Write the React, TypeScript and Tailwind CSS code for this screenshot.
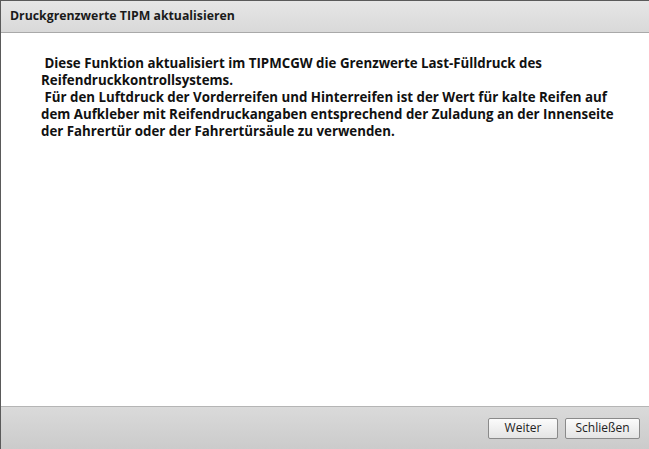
export default function App() {
  const lines = [
    "\u00a0Diese Funktion aktualisiert im TIPMCGW die Grenzwerte Last-Fülldruck des",
    "Reifendruckkontrollsystems.",
    "\u00a0Für den Luftdruck der Vorderreifen und Hinterreifen ist der Wert für kalte Reifen auf",
    "dem Aufkleber mit Reifendruckangaben entsprechend der Zuladung an der Innenseite",
    "der Fahrertür oder der Fahrertürsäule zu verwenden.",
  ];

  return (
    <div
      className="w-[649px] h-[449px] flex flex-col bg-white border-l border-t border-[#5a5a5a] overflow-hidden"
      style={{ fontFamily: '"Open Sans", "DejaVu Sans", sans-serif' }}
    >
      {/* Title bar */}
      <div className="h-[32px] shrink-0 flex items-center px-[9px] bg-gradient-to-b from-[#e6e6e6] to-[#d9d9d9] border-b border-[#a9a9a9]">
        <span className="text-[12.3px] font-bold text-[#1a1a1a]">Druckgrenzwerte TIPM aktualisieren</span>
      </div>

      {/* Body */}
      <div className="flex-1 pt-[22px] pl-[40px] text-[13.3px] font-bold leading-[17px] text-[#111]">
        {lines.map((l, i) => (
          <div key={i} className="whitespace-nowrap">{l}</div>
        ))}
      </div>

      {/* Footer */}
      <div className="h-[43px] shrink-0 flex items-center justify-end gap-[7px] pr-[9px] bg-gradient-to-b from-[#dadada] to-[#cbcbcb] border-t border-[#b5b5b5]">
        <button className="h-[21px] w-[70px] text-[12px] text-[#222] border border-[#8a8a8a] rounded-[2px] bg-gradient-to-b from-[#fbfbfb] to-[#e4e4e4]">
          Weiter
        </button>
        <button className="h-[21px] w-[75px] text-[12px] text-[#222] border border-[#8a8a8a] rounded-[2px] bg-gradient-to-b from-[#fbfbfb] to-[#e4e4e4]">
          Schließen
        </button>
      </div>
    </div>
  );
}
